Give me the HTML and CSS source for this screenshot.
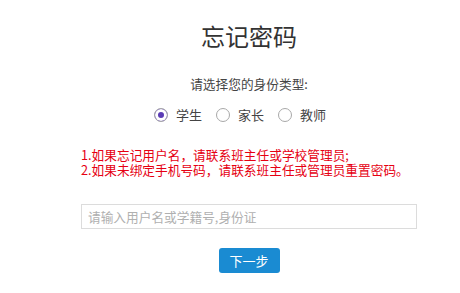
FILE: index.html
```html
<!DOCTYPE html>
<html lang="zh-CN">
<head>
<meta charset="utf-8">
<title>忘记密码</title>
<link rel="stylesheet" href="styles.css">
</head>
<body>
<div class="page">
  <h1 class="title">忘记密码</h1>
  <p class="subtitle">请选择您的身份类型:</p>
  <div class="roles">
    <label class="role"><input type="radio" name="role" checked><span>学生</span></label>
    <label class="role"><input type="radio" name="role"><span>家长</span></label>
    <label class="role"><input type="radio" name="role"><span>教师</span></label>
  </div>
  <div class="notes">
    <p>1.如果忘记用户名，请联系班主任或学校管理员;</p>
    <p>2.如果未绑定手机号码，请联系班主任或管理员重置密码。</p>
  </div>
  <input class="account" type="text" placeholder="请输入用户名或学籍号,身份证">
  <div class="actions">
    <button class="next" type="button">下一步</button>
  </div>
</div>
</body>
</html>
```
FILE: styles.css
```css
html, body {
  margin: 0;
  padding: 0;
  background: #fff;
}
body {
  font-family: "Noto Sans CJK SC", "Noto Sans", "Liberation Sans", sans-serif;
  color: #333;
}
.page {
  width: 336px;
  margin-left: 81px;
  padding-top: 21px;
  display: flex;
  flex-direction: column;
}
.title {
  margin: 0;
  font-size: 24px;
  line-height: 30px;
  font-weight: normal;
  text-align: center;
  color: #333;
}
.subtitle {
  margin: 24px 0 0;
  font-size: 12.7px;
  line-height: 18px;
  text-align: center;
  color: #444;
}
.roles {
  margin-top: 12px;
  display: flex;
  justify-content: center;
  padding-right: 18px;
  gap: 14px;
  height: 20px;
  align-items: center;
}
.role {
  display: flex;
  align-items: center;
  gap: 8px;
  font-size: 13px;
  line-height: 20px;
  color: #444;
}
.role input {
  appearance: none;
  -webkit-appearance: none;
  margin: 0;
  width: 14px;
  height: 14px;
  border: 1px solid #a8a8a8;
  border-radius: 50%;
  background: #fff;
  box-sizing: border-box;
}
.role input:checked {
  background: #5b3cb5;
  box-shadow: inset 0 0 0 3px #fff;
}
.notes {
  margin-top: 23px;
  color: #e60012;
  font-size: 12.7px;
  line-height: 14.5px;
}
.notes p {
  margin: 0;
  white-space: nowrap;
}
.account {
  margin-top: 27px;
  box-sizing: border-box;
  width: 336px;
  height: 25px;
  border: 1px solid #dcdcdc;
  padding: 0 6px;
  font-family: inherit;
  font-size: 12.7px;
  color: #333;
  outline: none;
}
.account::placeholder {
  color: #b0b0b0;
}
.actions {
  margin-top: 19px;
  display: flex;
  justify-content: center;
}
.next {
  width: 61px;
  height: 25px;
  border: none;
  border-radius: 3px;
  background: #1a8bd2;
  color: #fff;
  font-family: inherit;
  font-size: 13px;
  padding: 0;
  cursor: pointer;
}
```
